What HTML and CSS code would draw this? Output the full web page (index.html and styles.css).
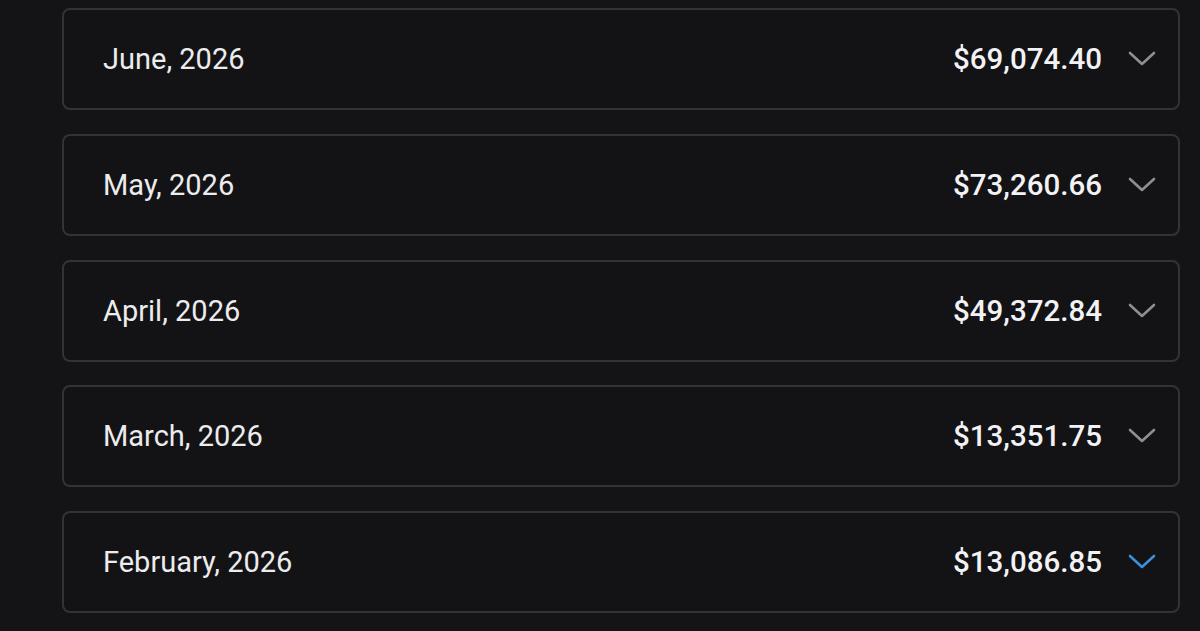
FILE: index.html
```html
<!DOCTYPE html>
<html lang="en">
<head>
<meta charset="utf-8">
<title>Monthly totals</title>
<link rel="stylesheet" href="styles.css">
</head>
<body>
<div class="list">
  <div class="card">
    <span class="month">June, 2026</span>
    <span class="right"><span class="amount">$69,074.40</span>
      <svg class="chev" viewBox="0 0 28 16" width="28" height="16"><path d="M2 2 L14 13 L26 2" /></svg></span>
  </div>
  <div class="card">
    <span class="month">May, 2026</span>
    <span class="right"><span class="amount">$73,260.66</span>
      <svg class="chev" viewBox="0 0 28 16" width="28" height="16"><path d="M2 2 L14 13 L26 2" /></svg></span>
  </div>
  <div class="card">
    <span class="month">April, 2026</span>
    <span class="right"><span class="amount">$49,372.84</span>
      <svg class="chev" viewBox="0 0 28 16" width="28" height="16"><path d="M2 2 L14 13 L26 2" /></svg></span>
  </div>
  <div class="card">
    <span class="month">March, 2026</span>
    <span class="right"><span class="amount">$13,351.75</span>
      <svg class="chev" viewBox="0 0 28 16" width="28" height="16"><path d="M2 2 L14 13 L26 2" /></svg></span>
  </div>
  <div class="card">
    <span class="month">February, 2026</span>
    <span class="right"><span class="amount">$13,086.85</span>
      <svg class="chev active" viewBox="0 0 28 16" width="28" height="16"><path d="M2 2 L14 13 L26 2" /></svg></span>
  </div>
</div>
</body>
</html>
```
FILE: styles.css
```css
html, body {
  margin: 0;
  padding: 0;
  background: #141416;
}
body {
  font-family: Roboto, "Liberation Sans", sans-serif;
  color: #ececee;
  height: 631px;
  overflow: hidden;
}
.list {
  display: flex;
  flex-direction: column;
  gap: 23.75px;
  padding: 8px 20px 0 62px;
}
.card {
  box-sizing: border-box;
  height: 102px;
  border: 2px solid #333337;
  border-radius: 8px;
  background: #131315;
  display: flex;
  align-items: center;
  justify-content: space-between;
  padding: 0 22px 0 39px;
}
.month {
  font-size: 29px;
  font-weight: 400;
  color: #ececee;
}
.right {
  display: flex;
  align-items: center;
  gap: 26px;
}
.amount {
  font-size: 29.5px;
  font-weight: 500;
  color: #f2f2f4;
}
.chev {
  display: block;
  fill: none;
  stroke: #8e8e93;
  stroke-width: 2.6;
  stroke-linecap: round;
  stroke-linejoin: round;
}
.chev.active {
  stroke: #3d8fdb;
}
```
